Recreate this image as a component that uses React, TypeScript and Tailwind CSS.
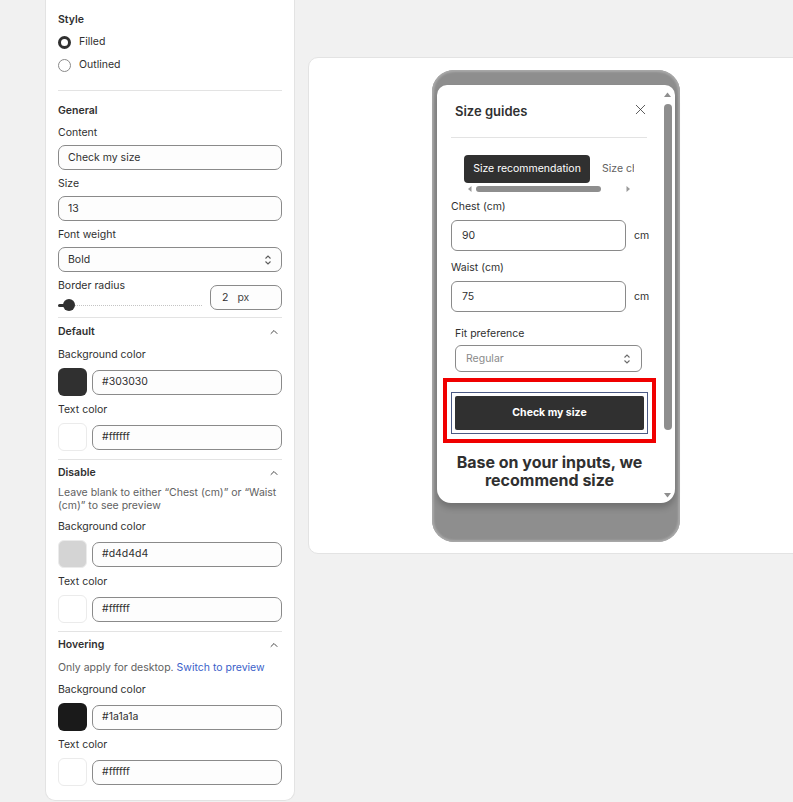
import { ChevronUp, X } from "lucide-react";

function Label({ children }: { children: React.ReactNode }) {
  return <div className="h-[14px] leading-[14px] text-[10.5px] text-[#303030]">{children}</div>;
}

function TextInput({ value }: { value: string }) {
  return (
    <div className="mt-[5px] flex h-[25px] items-center rounded-[7px] border border-[#8a8a8a] bg-[#fdfdfd] pl-[9px] text-[10.5px] text-[#303030]">
      {value}
    </div>
  );
}

function UpDown({ className }: { className?: string }) {
  return (
    <svg width="8" height="12" viewBox="0 0 8 12" className={className} fill="none" stroke="currentColor" strokeWidth="1.1">
      <path d="M1.5 4.5 4 2l2.5 2.5" />
      <path d="M1.5 7.5 4 10l2.5-2.5" />
    </svg>
  );
}

function Divider({ className }: { className?: string }) {
  return <div className={`h-px bg-[#e3e3e3] ${className ?? ""}`} />;
}

function SectionHead({ title }: { title: string }) {
  return (
    <div className="flex h-[14px] items-center justify-between">
      <span className="text-[10.5px] font-semibold text-[#303030]">{title}</span>
      <ChevronUp size={12} strokeWidth={2} className="mr-[2px] text-[#4a4a4a]" />
    </div>
  );
}

function ColorRow({ swatch, value, bordered }: { swatch: string; value: string; bordered?: boolean }) {
  return (
    <div className="mt-[6px] flex h-[28px] items-center gap-[5px]">
      <div
        className={`h-[28px] w-[29px] shrink-0 rounded-[6px] ${bordered ? "border border-[#ebebeb]" : ""}`}
        style={{ backgroundColor: swatch }}
      />
      <div className="flex h-[25px] flex-1 items-center rounded-[7px] border border-[#8a8a8a] bg-[#fdfdfd] pl-[9px] text-[10.5px] text-[#303030]">
        {value}
      </div>
    </div>
  );
}

function Sidebar() {
  return (
    <div className="ml-[45px] h-[801px] w-[250px] shrink-0 rounded-b-[10px] border-x border-b border-[#e3e3e3] bg-white px-[12px] pt-[13px]">
      <div className="h-[14px] text-[10.5px] font-semibold leading-[14px] text-[#303030]">Style</div>
      <div className="mt-[7px] flex h-[16px] items-center gap-[8px]">
        <span className="h-[13px] w-[13px] rounded-full border-[3.5px] border-[#303030] bg-white" />
        <span className="text-[10.5px] text-[#303030]">Filled</span>
      </div>
      <div className="mt-[7px] flex h-[16px] items-center gap-[8px]">
        <span className="h-[13px] w-[13px] rounded-full border border-[#8a8a8a] bg-white" />
        <span className="text-[10.5px] text-[#303030]">Outlined</span>
      </div>
      <Divider className="mt-[17px]" />

      <div className="mt-[13px] h-[14px] text-[10.5px] font-semibold leading-[14px] text-[#303030]">General</div>
      <div className="mt-[8px]">
        <Label>Content</Label>
        <TextInput value="Check my size" />
      </div>
      <div className="mt-[7px]">
        <Label>Size</Label>
        <TextInput value="13" />
      </div>
      <div className="mt-[7px]">
        <Label>Font weight</Label>
        <div className="mt-[5px] flex h-[25px] items-center justify-between rounded-[7px] border border-[#8a8a8a] bg-[#fdfdfd] pl-[9px] pr-[9px] text-[10.5px] text-[#303030]">
          Bold
          <UpDown className="text-[#5c5c5c]" />
        </div>
      </div>
      <div className="mt-[7px] flex h-[31px] items-start gap-[8px]">
        <div className="flex-1">
          <Label>Border radius</Label>
          <div className="relative mt-[6px] h-[12px]">
            <div className="absolute left-0 right-0 top-[5.5px] border-t border-dotted border-[#c4c4c4]" />
            <div className="absolute left-0 top-[4.5px] h-[3px] w-[8px] rounded-full bg-[#303030]" />
            <div className="absolute left-[5px] top-0 h-[12px] w-[12px] rounded-full bg-[#303030]" />
          </div>
        </div>
        <div className="mt-[6px] flex h-[25px] w-[72px] items-center rounded-[7px] border border-[#8a8a8a] bg-[#fdfdfd] pl-[11px] text-[10.5px] text-[#303030]">
          <span>2</span>
          <span className="ml-[9px] text-[#4a4a4a]">px</span>
        </div>
      </div>
      <Divider className="mt-[7px]" />

      <div className="mt-[7px]">
        <SectionHead title="Default" />
      </div>
      <div className="mt-[9px]">
        <Label>Background color</Label>
        <ColorRow swatch="#303030" value="#303030" />
      </div>
      <div className="mt-[7px]">
        <Label>Text color</Label>
        <ColorRow swatch="#ffffff" value="#ffffff" bordered />
      </div>
      <Divider className="mt-[8px]" />

      <div className="mt-[6px]">
        <SectionHead title="Disable" />
      </div>
      <div className="mt-[6px] text-[10.5px] leading-[13px] text-[#616161]">
        Leave blank to either “Chest (cm)” or “Waist (cm)” to see preview
      </div>
      <div className="mt-[8px]">
        <Label>Background color</Label>
        <ColorRow swatch="#d4d4d4" value="#d4d4d4" bordered />
      </div>
      <div className="mt-[7px]">
        <Label>Text color</Label>
        <ColorRow swatch="#ffffff" value="#ffffff" bordered />
      </div>
      <Divider className="mt-[8px]" />

      <div className="mt-[6px]">
        <SectionHead title="Hovering" />
      </div>
      <div className="mt-[9px] h-[14px] text-[10.5px] leading-[14px] text-[#616161]">
        Only apply for desktop. <span className="text-[#3b5fc9]">Switch to preview</span>
      </div>
      <div className="mt-[8px]">
        <Label>Background color</Label>
        <ColorRow swatch="#1a1a1a" value="#1a1a1a" />
      </div>
      <div className="mt-[7px]">
        <Label>Text color</Label>
        <ColorRow swatch="#ffffff" value="#ffffff" bordered />
      </div>
    </div>
  );
}

function PhoneField({ label, value }: { label: string; value: string }) {
  return (
    <div className="ml-[14px]">
      <div className="h-[14px] text-[10.5px] leading-[14px] text-[#303030]">{label}</div>
      <div className="mt-[6px] flex items-center">
        <div className="flex h-[31px] w-[175px] items-center rounded-[6px] border border-[#8a8a8a] pl-[10px] text-[10.5px] text-[#303030]">
          {value}
        </div>
        <span className="ml-[8px] text-[10.5px] text-[#303030]">cm</span>
      </div>
    </div>
  );
}

function Preview() {
  return (
    <div className="ml-[13px] mt-[57px] flex h-[497px] w-[496px] shrink-0 justify-center rounded-[10px] border border-[#e3e3e3] bg-white pt-[12px]">
      <div className="h-[472px] w-[248px] rounded-[22px] bg-[#8e8e8e] px-[5px] pb-[39px] pt-[15px] shadow-[inset_0_0_2px_2px_#a9a9a9]">
        <div className="flex h-[418px] overflow-hidden rounded-b-[14px] rounded-t-[10px] bg-white shadow-[0_5px_6px_rgba(0,0,0,0.2)]">
          <div className="flex-1 font-['Inter',sans-serif]">
            <div className="flex h-[52px] items-start justify-between pl-[18px] pr-[13px] pt-[16px]">
              <span className="text-[13px] font-semibold leading-[20px] text-[#303030]">Size guides</span>
              <X size={17} strokeWidth={1.1} className="text-[#303030]" />
            </div>
            <Divider className="ml-[14px] mr-[15px]" />

            <div className="ml-[27px] mt-[17px] w-[170px] overflow-hidden">
              <div className="flex items-center gap-[12px] whitespace-nowrap">
                <div className="flex h-[28px] w-[126px] shrink-0 items-center justify-center rounded-[4px] bg-[#303030] text-[10.5px] text-white">
                  Size recommendation
                </div>
                <span className="text-[10.5px] text-[#616161]">Size chart</span>
              </div>
              <div className="mt-[2px] flex h-[8px] items-center">
                <svg width="8" height="8" viewBox="0 0 8 8" className="ml-[2px] shrink-0">
                  <path d="M5.5 1 2 4l3.5 3z" fill="#9a9a9a" />
                </svg>
                <div className="ml-[2px] h-[6px] w-[125px] rounded-full bg-[#8e8e8e]" />
                <div className="flex-1" />
                <svg width="8" height="8" viewBox="0 0 8 8" className="mr-[2px] shrink-0">
                  <path d="M2.5 1 6 4 2.5 7z" fill="#9a9a9a" />
                </svg>
              </div>
            </div>

            <div className="mt-[7px]">
              <PhoneField label="Chest (cm)" value="90" />
            </div>
            <div className="mt-[10px]">
              <PhoneField label="Waist (cm)" value="75" />
            </div>

            <div className="ml-[18px] mr-[20px] mt-[15px]">
              <div className="h-[14px] text-[10.5px] leading-[14px] text-[#303030]">Fit preference</div>
              <div className="mt-[4px] flex h-[27px] items-center justify-between rounded-[6px] border border-[#8a8a8a] pl-[10px] pr-[10px] text-[10.5px] text-[#8a8a8a]">
                Regular
                <UpDown className="text-[#6b6b6b]" />
              </div>
            </div>

            <div className="ml-[6px] mr-[6px] mt-[6px] h-[65px] border-[4px] border-[#f00000] px-[4px] pt-[10px]">
              <div className="border border-[#4b5a85] p-[3px]">
                <div className="flex h-[34px] items-center justify-center rounded-[2px] bg-[#303030] text-[10.5px] font-bold text-white">
                  Check my size
                </div>
              </div>
            </div>

            <div className="mt-[10px] text-center text-[16px] font-bold text-[#303030]">
              <div className="h-[18px] leading-[18px]">Base on your inputs, we</div>
              <div className="h-[18px] leading-[18px]">recommend size</div>
            </div>
          </div>

          <div className="mr-[2px] flex w-[11px] flex-col items-center pt-[6px]">
            <svg width="9" height="7" viewBox="0 0 9 7">
              <path d="M1 6 4.5 1.5 8 6z" fill="#8e8e8e" />
            </svg>
            <div className="mt-[6px] h-[326px] w-[8px] rounded-full bg-[#8e8e8e]" />
            <div className="flex-1" />
            <svg width="9" height="7" viewBox="0 0 9 7" className="mb-[4px]">
              <path d="M1 1 4.5 5.5 8 1z" fill="#8e8e8e" />
            </svg>
          </div>
        </div>
      </div>
    </div>
  );
}

export default function App() {
  return (
    <div className="flex h-[802px] w-[793px] items-start overflow-hidden bg-[#f1f1f1] font-['Inter',sans-serif]">
      <Sidebar />
      <Preview />
    </div>
  );
}
